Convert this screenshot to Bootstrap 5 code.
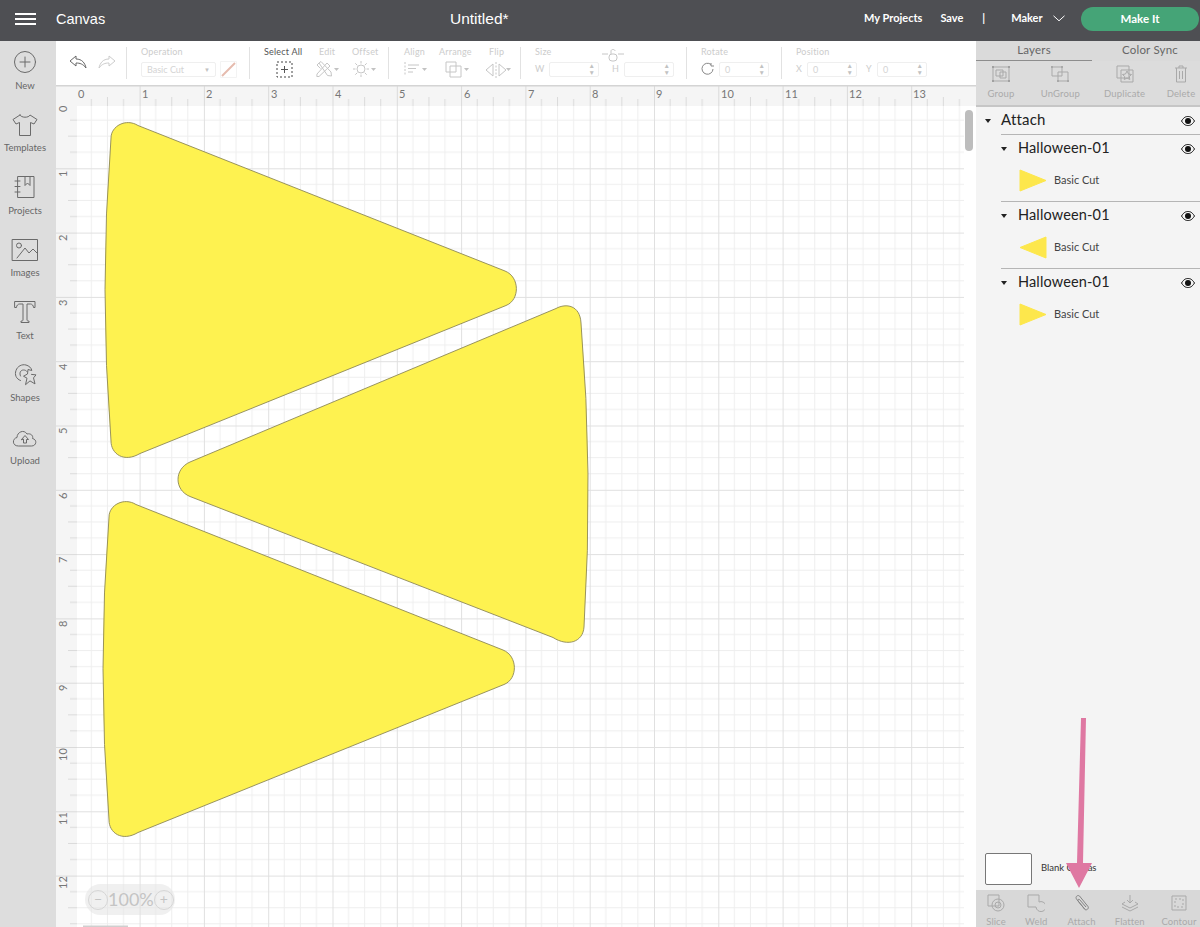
<!DOCTYPE html>
<html lang="en">
<head>
<meta charset="utf-8">
<title>Canvas</title>
<link href="https://cdn.jsdelivr.net/npm/bootstrap@5.3.0/dist/css/bootstrap.min.css" rel="stylesheet">
<style>
html,body{height:927px;overflow:hidden;background:#fff}
body{font-family:Lato,"Liberation Sans",sans-serif;color:#333;position:relative}
.topbar{height:41px;background:#4e4f53;color:#fff;padding-bottom:4px}
.burger{width:21px;margin-left:15px;margin-right:20px}
.burger i{display:block;height:2px;background:#fff;margin:3px 0}
.appname{font:14.5px "Liberation Sans",sans-serif;width:394px}
.doctitle{font:15.5px "Liberation Sans",sans-serif;width:414px}
.toplink{font-size:11px;font-weight:700}
.makeit{width:118px;height:24px;background:#45a477;border-radius:12px;font-size:11.5px;font-weight:700;margin:0 1px 0 auto;padding:0;border:0;color:#fff}
.mainarea{height:886px}
.sidebar{width:56px;background:#dddddd;padding:9px 6px 0 0}
.sideitem{height:62.6px;font-size:9.5px;color:#666;line-height:1}
.sideitem svg{margin-bottom:6.500px}
.stroke{fill:none;stroke:#6a6a6a;stroke-width:1;stroke-linejoin:round;stroke-linecap:round}
.center{width:920px}
.toolbar{height:44px;background:#fff;color:#cccccc;font-size:9px;line-height:1}
.tgroup{border-right:1px solid #e2e2e2;height:32px;margin-top:6px;flex:none}
.lbl{position:absolute;top:0;white-space:nowrap;letter-spacing:.2px}
.ctl{position:absolute;top:15px}
.boxy{height:15px;border:1px solid #efefef;border-radius:2px;color:#d4d4d4;font-size:9px;line-height:13px;padding-left:5px}
.stepper{position:absolute;right:3px;top:0;font-size:6.500px;line-height:6.500px;color:#c2c2c2}
.soft{fill:none;stroke:#c6c6c6;stroke-width:1;stroke-linejoin:round}
.artboard{height:842px;display:block}
.panel{width:224px;background:#f4f4f4}
.tabrow{height:20px;background:#dadada;font-size:11.5px;color:#666;letter-spacing:.2px}
.tabrow div{line-height:18px;height:20px;text-align:center}
.tabon{width:116px;border-bottom:1px solid #8d8d8d}
.taboff{width:108px;padding-left:8px}
.actrow{height:46px;background:#dcdcdc;border-bottom:2px solid #c6c6c6;font-size:9.5px;color:#aaa;line-height:1;letter-spacing:.15px;white-space:nowrap}
.actrow>div,.botrow>div{text-align:center}
.actrow svg{display:block;margin:0 auto 6px}
.botrow svg{display:block;margin:4px auto 5px}
.dim{fill:none;stroke:#a9a9a9;stroke-width:1;stroke-linejoin:round}
.layerhead{height:27px;font-size:15px;color:#222;letter-spacing:.2px}
.caret{width:0;height:0;border-left:3.500px solid transparent;border-right:3.500px solid transparent;border-top:4px solid #222;flex:none}
.subhead{font-size:14.5px;letter-spacing:.15px;color:#222;height:27px}
.uptext{padding-bottom:2px}
.subblock{height:67px;margin-left:25px;border-top:1px solid #b5b5b5}
.subline{font-size:11px;color:#444;height:36px;margin-left:18px}
.thumb{margin-right:7px}
.swatchrow{height:46px;font-size:9.5px;color:#333;padding-top:3px}
.swatchbox{width:47px;height:32px;background:#fff;border:1px solid #777;border-radius:2px}
.botrow{height:37px;background:#d8d8d8;font-size:9.5px;color:#aaa;line-height:1;overflow:hidden;white-space:nowrap;letter-spacing:.1px}
.zoompill{position:absolute;left:85px;top:884px;width:90px;height:31px;border-radius:16px;background:rgba(225,225,225,.5);color:#c4c4c4;font-size:18px;padding:0 3px}
.zcirc{width:20px;height:20px;border:1.500px solid #d6d6d6;border-radius:50%;font-size:14px;line-height:15px;text-align:center;flex:none}
.pointer{position:absolute;left:1060px;top:716px}
</style>
</head>
<body>
<header class="topbar d-flex align-items-center">
  <div class="burger"><i></i><i></i><i></i></div>
  <div class="appname">Canvas</div>
  <div class="doctitle">Untitled*</div>
  <span class="toplink">My Projects</span>
  <span class="toplink" style="margin-left:18px">Save</span>
  <span class="toplink" style="margin-left:19px">|</span>
  <span class="toplink" style="margin-left:26px">Maker</span>
  <svg width="12" height="7" viewBox="0 0 12 7" style="margin-left:10px"><path d="M.5.8 6 5.800 11.500.8" fill="none" stroke="#fff" stroke-width="1"/></svg>
  <button class="makeit btn">Make It</button>
</header>
<div class="d-flex mainarea">
  <aside class="sidebar d-flex flex-column flex-none">
    <div class="sideitem d-flex flex-column align-items-center">
      <svg width="24" height="24" viewBox="0 0 24 24"><circle class="stroke" cx="12" cy="12" r="10.500"/><path class="stroke" d="M12 7v10M7 12h10"/></svg>New</div>
    <div class="sideitem d-flex flex-column align-items-center">
      <svg width="26" height="24" viewBox="0 0 26 24"><path class="stroke" d="M8 2 1 6.500 4 11l3.500-1.500V22.500h11V9.500L22 11l3-4.500L18 2c-1 3-9 3-10 0Z"/></svg>Templates</div>
    <div class="sideitem d-flex flex-column align-items-center">
      <svg width="24" height="24" viewBox="0 0 24 24"><path class="stroke" d="M5 1.500h16v21H5zM12 1.500v9l2.500-2.500 2.500 2.500v-9M2 6h5M2 11.500h5M2 17h5"/></svg>Projects</div>
    <div class="sideitem d-flex flex-column align-items-center">
      <svg width="28" height="24" viewBox="0 0 28 24"><path class="stroke" d="M1.500 1.500h25v21h-25z"/><circle class="stroke" cx="8" cy="7.500" r="2.500"/><path class="stroke" d="m6 20 8-10 4 5 4-4 4 4"/></svg>Images</div>
    <div class="sideitem d-flex flex-column align-items-center">
      <svg width="24" height="24" viewBox="0 0 24 24"><path class="stroke" d="M2 1.500h20v6h-1.500c0-2-1.500-3.500-3-3.500H14v16c0 1 1 1 2 1v1.500H8V21c1 0 2 0 2-1V4H6.500c-1.500 0-3 1.500-3 3.500H2z"/></svg>Text</div>
    <div class="sideitem d-flex flex-column align-items-center">
      <svg width="24" height="24" viewBox="0 0 24 24"><path class="stroke" d="M7.500 17.500C3 16 1.500 11.500 3 7.500 4.500 3 9 1 13 2c3 .8 5.500 3 5.800 5.500L15 6.500l-.5 4.500-4 2.200 3.500 2-1.500 6.500 4.500-3.800 5 3-1.500-6 2.500-3-4.500-.5"/><path class="stroke" d="M7.500 13C6 10 7.500 7 10.500 7c1.500 0 2.800.6 3.500 1.500"/></svg>Shapes</div>
    <div class="sideitem d-flex flex-column align-items-center">
      <svg width="26" height="24" viewBox="0 0 26 20"><path class="stroke" d="M6 18c-6 0-6-7.500-1-8.500C5 4 12 1 15 6c4-1 6.500 2 5.500 4.500 5 1 4 7.500-.5 7.500Z"/><path class="stroke" d="M9.500 11.500 13 7.500l3.500 4h-2V15h-3v-3.500Z"/></svg>Upload</div>
  </aside>

  <main class="center d-flex flex-column">
    <div class="toolbar d-flex">
      <div class="tgroup position-relative" style="width:71px">
        <svg class="ctl" style="left:13px;top:8px" width="18" height="15" viewBox="0 0 18 15"><path d="M7 1 1 6l6 5V8c4 0 7 1 10 5-1-5-4-9-10-9Z" fill="none" stroke="#666"/></svg>
        <svg class="ctl" style="left:42px;top:8px" width="18" height="15" viewBox="0 0 18 15"><path d="m11 1 6 5-6 5V8C7 8 4 9 1 13c1-5 4-9 10-9Z" fill="none" stroke="#ccc"/></svg>
      </div>
      <div class="tgroup position-relative" style="width:123px">
        <span class="lbl" style="left:14px">Operation</span>
        <div class="ctl boxy" style="left:14px;width:75px">Basic Cut<span class="position-absolute" style="right:5px;font-size:6px;color:#c2c2c2">&#9660;</span></div>
        <svg class="ctl" style="left:93px;top:14px" width="17" height="17" viewBox="0 0 17 17"><path d="M.5.5h16v16H.5z" fill="none" stroke="#f3f3f3"/><path d="M2 15 15 2" stroke="#e6bbae" stroke-width="2"/></svg>
      </div>
      <div class="tgroup position-relative" style="width:139px">
        <span class="lbl" style="left:14px;color:#555">Select All</span>
        <span class="lbl" style="left:69px">Edit</span>
        <span class="lbl" style="left:102px">Offset</span>
        <svg class="ctl" style="left:26px;top:14px" width="17" height="17" viewBox="0 0 17 17"><path d="M1 1h15v15H1z" fill="none" stroke="#444" stroke-dasharray="2 2"/><path d="M8.500 5v7M5 8.500h7" stroke="#555"/></svg>
        <svg class="ctl" style="left:66px;top:14px" width="24" height="16" viewBox="0 0 24 16"><path d="M1 13 11 2l3 3L3 15.500 .8 15.500ZM3 2l2-1.500L15 11l.5 4-4-.5ZM3 2 1 4l3.500 3.500" class="soft"/><path d="m18 7 5 0-2.500 3z" fill="#c2c2c2"/></svg>
        <svg class="ctl" style="left:103px;top:14px" width="24" height="16" viewBox="0 0 24 16"><circle cx="8" cy="8" r="4" class="soft"/><path d="M8 0v2.500M8 13.500V16M0 8h2.500M13.500 8H16M2.300 2.300l2 2M11.700 11.700l2 2M2.300 13.700l2-2M11.700 4.300l2-2" class="soft"/><path d="m18 7 5 0-2.500 3z" fill="#c2c2c2"/></svg>
      </div>
      <div class="tgroup position-relative" style="width:132px">
        <span class="lbl" style="left:15px">Align</span>
        <span class="lbl" style="left:50px">Arrange</span>
        <span class="lbl" style="left:100px">Flip</span>
        <svg class="ctl" style="left:15px;top:14px" width="24" height="16" viewBox="0 0 24 16"><path d="M1 1v14" class="soft" stroke-dasharray="2 1.500"/><path d="M4 4h11M4 7.500h8M4 11h5" class="soft"/><path d="m18 7 5 0-2.500 3z" fill="#c2c2c2"/></svg>
        <svg class="ctl" style="left:56px;top:14px" width="26" height="18" viewBox="0 0 26 18"><path d="M1 1h10v10H1zM5 5h11v11H5z" class="soft"/><path d="m19 7 5 0-2.500 3z" fill="#c2c2c2"/></svg>
        <svg class="ctl" style="left:96px;top:14px" width="26" height="18" viewBox="0 0 26 18"><path d="M8 3 1 9l7 6zM14 3l7 6-7 6z" class="soft"/><path d="M11 1v16" class="soft" stroke-dasharray="2 1.500"/><path d="m21 7 5 0-2.500 3z" fill="#c2c2c2"/></svg>
      </div>
      <div class="tgroup position-relative" style="width:166px">
        <span class="lbl" style="left:14px">Size</span>
        <span class="lbl" style="left:14px;top:17px">W</span>
        <div class="ctl boxy" style="left:28px;width:50px"><span class="stepper">&#9650;<br>&#9660;</span></div>
        <svg class="ctl" style="left:80px;top:1px" width="24" height="14" viewBox="0 0 24 14"><rect x="8" y="6" width="8" height="7" rx="3" class="soft"/><path d="M10 6V3c0-2 4-2 4 0M1 6h6M17 6h6" class="soft"/></svg>
        <span class="lbl" style="left:91px;top:17px">H</span>
        <div class="ctl boxy" style="left:103px;width:50px"><span class="stepper">&#9650;<br>&#9660;</span></div>
      </div>
      <div class="tgroup position-relative" style="width:95px">
        <span class="lbl" style="left:14px">Rotate</span>
        <svg class="ctl" style="left:14px;top:15px" width="14" height="14" viewBox="0 0 14 14"><path d="M12 7a5.500 5.500 0 1 1-2-4.500" fill="none" stroke="#888"/><path d="m10 1v3h3" fill="none" stroke="#888"/></svg>
        <div class="ctl boxy" style="left:32px;width:50px">0<span class="stepper">&#9650;<br>&#9660;</span></div>
      </div>
      <div class="tgroup position-relative border-0" style="width:194px">
        <span class="lbl" style="left:14px">Position</span>
        <span class="lbl" style="left:14px;top:17px">X</span>
        <div class="ctl boxy" style="left:25px;width:50px">0<span class="stepper">&#9650;<br>&#9660;</span></div>
        <span class="lbl" style="left:84px;top:17px">Y</span>
        <div class="ctl boxy" style="left:95px;width:50px">0<span class="stepper">&#9650;<br>&#9660;</span></div>
      </div>
    </div>

    <svg class="artboard" width="920" height="842" viewBox="56 85 920 842" font-family="Lato,'Liberation Sans',sans-serif">
      <defs>
        <pattern id="gridp" patternUnits="userSpaceOnUse" x="75.3" y="104" width="64.3" height="64.3">
          <path d="M16.070 0v64.3M32.150 0v64.3M48.220 0v64.3M0 16.070h64.300M0 32.150h64.300M0 48.220h64.300" stroke="#eeeeee" stroke-width="1" fill="none"/>
          <path d="M.5 0v64.3M0 .5h64.300" stroke="#e0e0e0" stroke-width="1" fill="none"/>
        </pattern>
        <pattern id="tickx" patternUnits="userSpaceOnUse" x="75.3" y="86" width="64.3" height="20">
          <path d="M.5 0v20" stroke="#dadada"/><path d="M16.070 13v7M32.150 11v9M48.220 13v7" stroke="#dadada"/>
        </pattern>
        <pattern id="ticky" patternUnits="userSpaceOnUse" x="56" y="104" width="21" height="64.3">
          <path d="M0 .5h21" stroke="#dadada"/><path d="M14 16.070h7M12 32.150h9M14 48.220h7" stroke="#dadada"/>
        </pattern>
      </defs>
      <rect x="56" y="85" width="920" height="842" fill="#fff"/>
      <rect x="77" y="106" width="887" height="821" fill="url(#gridp)"/>
      <rect x="56" y="86" width="920" height="20" fill="#f5f5f5"/>
      <rect x="77" y="86" width="887" height="20" fill="url(#tickx)"/>
      <rect x="56" y="106" width="21" height="821" fill="#f5f5f5"/>
      <rect x="56" y="106" width="21" height="821" fill="url(#ticky)"/>
      <rect x="56" y="85" width="920" height="1.500" fill="#d4d4d4"/>
      <g font-size="11" fill="#777">
        <text x="78" y="98">0</text><text x="142" y="98">1</text><text x="206" y="98">2</text><text x="271" y="98">3</text><text x="335" y="98">4</text><text x="399" y="98">5</text><text x="464" y="98">6</text><text x="528" y="98">7</text><text x="592" y="98">8</text><text x="656" y="98">9</text><text x="721" y="98">10</text><text x="785" y="98">11</text><text x="849" y="98">12</text><text x="913" y="98">13</text>
        <text transform="translate(67,112) rotate(-90)">0</text><text transform="translate(67,177) rotate(-90)">1</text><text transform="translate(67,241) rotate(-90)">2</text><text transform="translate(67,306) rotate(-90)">3</text><text transform="translate(67,370) rotate(-90)">4</text><text transform="translate(67,434) rotate(-90)">5</text><text transform="translate(67,499) rotate(-90)">6</text><text transform="translate(67,563) rotate(-90)">7</text><text transform="translate(67,627) rotate(-90)">8</text><text transform="translate(67,691) rotate(-90)">9</text><text transform="translate(67,761) rotate(-90)">10</text><text transform="translate(67,825) rotate(-90)">11</text><text transform="translate(67,889) rotate(-90)">12</text>
      </g>
      <rect x="965" y="110" width="8" height="41" rx="4" fill="#bdbdbd"/>
      <rect x="83" y="925.500" width="45" height="2" fill="#cfcfcf"/>
      <g fill="#fef250" stroke="#8d8855" stroke-width=".9">
        <path d="M138 125.500 505 271C520 277 520 300 506 305.500L140 453.500C124 463 111 454 111 441Q99 290 111 138C111 126 126 118 138 125.500Z"/>
        <path transform="translate(-2 379)" d="M138 125.500 505 271C520 277 520 300 506 305.500L140 453.500C124 463 111 454 111 441Q99 290 111 138C111 126 126 118 138 125.500Z"/>
        <path d="M556 308.500C566 303 580 305 581 323Q593.500 473 584 627C583 642 568 647 553 637.500L190 496.500C174 490 174 469 190 462Z"/>
      </g>
    </svg>
  </main>

  <section class="panel d-flex flex-column flex-none">
    <div class="tabrow d-flex"><div class="tabon">Layers</div><div class="taboff">Color Sync</div></div>
    <div class="actrow d-flex pt-1 justify-content-between" style="padding-left:4px;padding-right:2px">
      <div style="width:42px"><svg width="20" height="18" viewBox="0 0 20 18"><path class="dim" d="M2 2h16v14H2zM5 5h7v6H5zM9 7h6v6H9z"/><path d="M1 1h2v2H1zM17 1h2v2h-2zM1 15h2v2H1zM17 15h2v2h-2z" fill="#a0a0a0"/></svg>Group</div>
      <div style="width:50px"><svg width="20" height="18" viewBox="0 0 20 18"><path class="dim" d="M2 2h10v9H2zM8 7h10v9H8z"/><path d="M1 1h2v2H1zM11 1h2v2h-2zM17 15h2v2h-2zM7 15h2v2H7z" fill="#a9a9a9"/></svg>UnGroup</div>
      <div style="width:52px"><svg width="18" height="18" viewBox="0 0 18 18"><path class="dim" d="M1 1h12v4h4v12H5v-4H1zM5 5h8v8H5zM11 6l1.500 3 3 .5-2.200 2 .5 3L11 13l-2.800 1.500.5-3-2.200-2 3-.5z"/></svg>Duplicate</div>
      <div style="width:34px"><svg width="14" height="18" viewBox="0 0 14 18"><path class="dim" d="M1 3h12M5 3V1h4v2M2.500 3v14h9V3M5.500 6v8M8.500 6v8"/></svg>Delete</div>
    </div>
    <div class="flex-grow-1 d-flex flex-column">
      <div class="layerhead d-flex align-items-center" style="padding:0 5px 0 9px">
        <span class="caret" style="margin-right:10px"></span><span class="uptext">Attach</span>
        <svg class="ms-auto" width="14" height="10" viewBox="0 0 14 10"><path d="M.5 5C3 1 5 .5 7 .5s4 .5 6.500 4.500C11 9 9 9.500 7 9.500S3 9 .5 5Z" fill="none" stroke="#111"/><circle cx="7" cy="5" r="3" fill="#111"/></svg>
      </div>
      <div class="subblock">
        <div class="subhead d-flex align-items-center" style="padding-right:5px">
          <span class="caret" style="margin-right:11px"></span><span class="uptext">Halloween-01</span>
          <svg class="ms-auto" width="14" height="10" viewBox="0 0 14 10"><path d="M.5 5C3 1 5 .5 7 .5s4 .5 6.500 4.500C11 9 9 9.500 7 9.500S3 9 .5 5Z" fill="none" stroke="#111"/><circle cx="7" cy="5" r="3" fill="#111"/></svg>
        </div>
        <div class="subline d-flex align-items-center">
          <svg width="28" height="23" viewBox="0 0 28 23" class="thumb"><path d="M1 1 27 11.500 1 22Z" fill="#fde74c" stroke="#fde74c" stroke-linejoin="round"/></svg>Basic Cut
        </div>
      </div>
      <div class="subblock">
        <div class="subhead d-flex align-items-center" style="padding-right:5px">
          <span class="caret" style="margin-right:11px"></span><span class="uptext">Halloween-01</span>
          <svg class="ms-auto" width="14" height="10" viewBox="0 0 14 10"><path d="M.5 5C3 1 5 .5 7 .5s4 .5 6.500 4.500C11 9 9 9.500 7 9.500S3 9 .5 5Z" fill="none" stroke="#111"/><circle cx="7" cy="5" r="3" fill="#111"/></svg>
        </div>
        <div class="subline d-flex align-items-center">
          <svg width="28" height="23" viewBox="0 0 28 23" class="thumb"><path d="M27 1 1 11.500 27 22Z" fill="#fde74c" stroke="#fde74c" stroke-linejoin="round"/></svg>Basic Cut
        </div>
      </div>
      <div class="subblock">
        <div class="subhead d-flex align-items-center" style="padding-right:5px">
          <span class="caret" style="margin-right:11px"></span><span class="uptext">Halloween-01</span>
          <svg class="ms-auto" width="14" height="10" viewBox="0 0 14 10"><path d="M.5 5C3 1 5 .5 7 .5s4 .5 6.500 4.500C11 9 9 9.500 7 9.500S3 9 .5 5Z" fill="none" stroke="#111"/><circle cx="7" cy="5" r="3" fill="#111"/></svg>
        </div>
        <div class="subline d-flex align-items-center">
          <svg width="28" height="23" viewBox="0 0 28 23" class="thumb"><path d="M1 1 27 11.500 1 22Z" fill="#fde74c" stroke="#fde74c" stroke-linejoin="round"/></svg>Basic Cut
        </div>
      </div>
      <div class="mt-auto swatchrow d-flex align-items-center" style="padding-left:9px">
        <div class="swatchbox" style="margin-right:9px"></div>Blank Canvas
      </div>
    </div>
    <div class="botrow d-flex justify-content-between" style="padding:0 0 0 5px">
      <div style="width:30px"><svg width="18" height="18" viewBox="0 0 18 18"><path class="dim" d="M1 1h11v11H1z"/><circle class="dim" cx="11" cy="11" r="6"/><circle class="dim" cx="11" cy="11" r="3"/></svg>Slice</div>
      <div style="width:30px"><svg width="18" height="18" viewBox="0 0 18 18"><path class="dim" d="M1 1h11v7a5 5 0 1 1-3 5H1z"/></svg>Weld</div>
      <div style="width:40px"><svg width="16" height="18" viewBox="0 0 16 18"><path d="M11 15.500 2.500 5C1 3 3.500 .5 5.500 2l8.500 10.500c1.300 2-1.500 4.200-3 3L4 7c-.7-1 .7-2.200 1.500-1.500L12 13" fill="none" stroke="#858585"/></svg>Attach</div>
      <div style="width:36px"><svg width="18" height="18" viewBox="0 0 18 18"><path class="dim" d="M9 1v8M6 6l3 3 3-3M4 8 1 10l8 4 8-4-3-2M1 13l8 4 8-4"/></svg>Flatten</div>
      <div style="width:42px"><svg width="18" height="18" viewBox="0 0 18 18"><path class="dim" d="M2 2h14v14H2z"/><path class="dim" stroke-dasharray="2 2" d="M5 5h8v8H5z"/></svg>Contour</div>
    </div>
  </section>
</div>

<div class="zoompill d-flex align-items-center justify-content-between">
  <span class="zcirc">&minus;</span><span>100%</span><span class="zcirc">+</span>
</div>
<svg class="pointer" width="40" height="176" viewBox="0 0 40 176"><path d="M21 2h5l-3 145h9l-13 25-13-25h11z" fill="#df78a2"/></svg>
</body>
</html>
